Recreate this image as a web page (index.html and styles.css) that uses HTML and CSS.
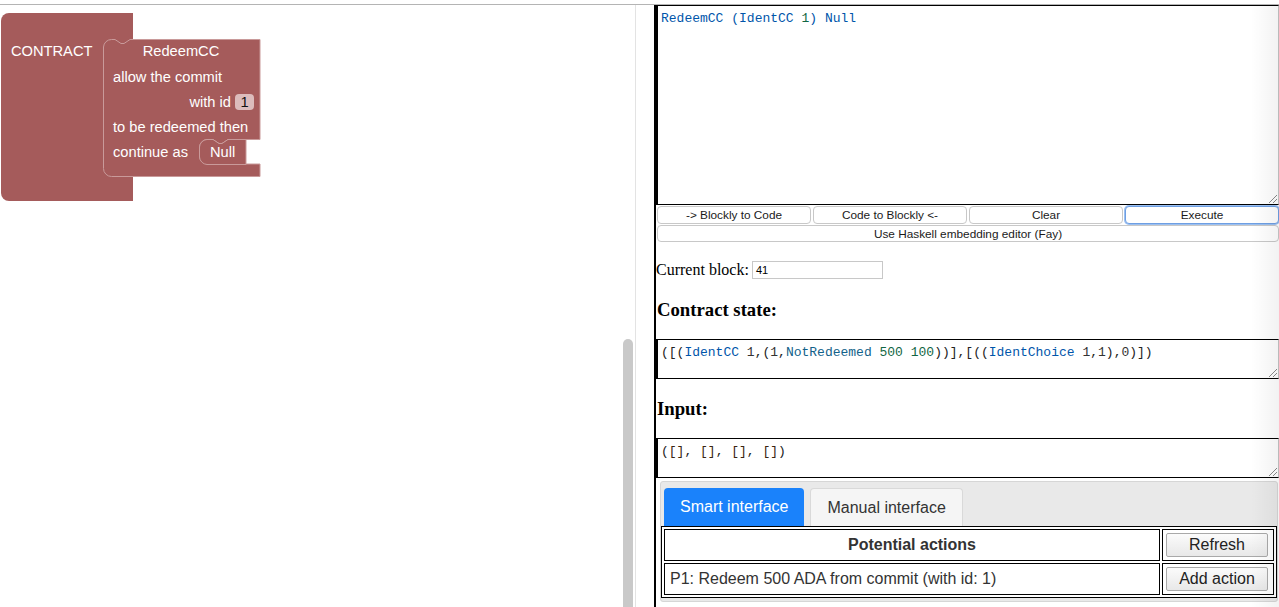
FILE: index.html
```html
<!DOCTYPE html>
<html>
<head>
<meta charset="utf-8">
<title>Marlowe</title>
<link rel="stylesheet" href="styles.css">
</head>
<body>
<div class="topbar"></div>
<div class="main">
  <div class="workspace">
    <svg class="blocks" width="300" height="210" viewBox="0 5 300 210" xmlns="http://www.w3.org/2000/svg">
      <path class="blk" d="M1,21 A8,8 0 0 1 9,13 L133,13 L133,201 L9,201 A8,8 0 0 1 1,193 Z"/>
      <path class="blk hl" d="M103.5,47 A8,8 0 0 1 111.5,39.5 L115,39.5 l6,4 l3,0 l6,-4 L260,39.5 L260,139.5 L228,139.5 l-6,4 l-3,0 l-6,-4 L207,139.5 A8,8 0 0 0 199.5,147 L199.5,156 A8,8 0 0 0 207,164 L260,164 L260,176.5 L111.5,176.5 A8,8 0 0 1 103.5,168.5 Z"/>
      <path class="blk hl" d="M199.5,147 A8,8 0 0 1 207,139.5 L213,139.5 l6,4 l3,0 l6,-4 L246,139.5 L246,164.5 L207,164.5 A8,8 0 0 1 199.5,157 Z"/>
      <rect class="numfield" x="235" y="94" width="19" height="16" rx="4" ry="4"/>
      <text class="lbl" x="11" y="56">CONTRACT</text>
      <text class="lbl" x="181" y="56" text-anchor="middle">RedeemCC</text>
      <text class="lbl" x="113" y="82">allow the commit</text>
      <text class="lbl" x="231" y="107" text-anchor="end">with id</text>
      <text class="num" x="244.5" y="107" text-anchor="middle">1</text>
      <text class="lbl" x="113" y="132">to be redeemed then</text>
      <text class="lbl" x="113" y="157">continue as</text>
      <text class="lbl" x="210" y="157">Null</text>
    </svg>
    <div class="scrollbar"></div>
  </div>
  <div class="spacer"></div>
  <div class="panel">
    <div class="code code-main"><span class="v">RedeemCC</span> <span class="v">(IdentCC</span> <span class="n">1</span><span class="v">)</span> <span class="v">Null</span></div>
    <div class="btn-row">
      <button class="btn">-&gt; Blockly to Code</button>
      <button class="btn">Code to Blockly &lt;-</button>
      <button class="btn">Clear</button>
      <button class="btn focus">Execute</button>
    </div>
    <button class="btn wide">Use Haskell embedding editor (Fay)</button>
    <div class="current">Current block:<span class="field">41</span></div>
    <h3 class="heading">Contract state:</h3>
    <div class="code code-small"><span class="b">([(</span><span class="v">IdentCC</span> <span class="d">1</span><span class="b">,(</span><span class="d">1</span><span class="b">,</span><span class="t">NotRedeemed</span> <span class="n">500</span> <span class="n">100</span><span class="b">))],[((</span><span class="v">IdentChoice</span> <span class="d">1</span><span class="b">,</span><span class="d">1</span><span class="b">),</span><span class="d">0</span><span class="b">)])</span></div>
    <h3 class="heading heading-input">Input:</h3>
    <div class="code code-small"><span class="b">(</span><span class="br">[]</span><span class="b">, </span><span class="br">[]</span><span class="b">, </span><span class="br">[]</span><span class="b">, </span><span class="br">[]</span><span class="b">)</span></div>
    <div class="tabs-box">
      <div class="tabs">
        <div class="tab active">Smart interface</div>
        <div class="tab inactive">Manual interface</div>
      </div>
      <table class="actions">
        <tr>
          <td class="head">Potential actions</td>
          <td class="btn-cell"><button class="act">Refresh</button></td>
        </tr>
        <tr>
          <td class="desc">P1: Redeem 500 ADA from commit (with id: 1)</td>
          <td class="btn-cell"><button class="act">Add action</button></td>
        </tr>
      </table>
    </div>
    <div class="edge-shade"></div>
  </div>
</div>
</body>
</html>
```

FILE: styles.css
```css
html, body {
  margin: 0;
  padding: 0;
  background: #fff;
}
body {
  font-family: "Liberation Serif", "Times New Roman", serif;
  overflow: hidden;
  width: 1279px;
  height: 607px;
}
.topbar {
  height: 4px;
  border-bottom: 1px solid #b4b4b4;
}
.main {
  display: flex;
  height: 602px;
}
.workspace {
  position: relative;
  width: 635px;
  flex: none;
  border-right: 1px solid #e3e3e3;
}
.blocks {
  display: block;
}
.blk {
  fill: #a55b5b;
}
.hl {
  stroke: #c99a9a;
  stroke-width: 1;
}
.numfield {
  fill: #dcbcbc;
}
.lbl {
  fill: #fff;
  font-family: "Liberation Sans", Arial, sans-serif;
  font-size: 14.67px;
}
.num {
  fill: #111;
  font-family: "Liberation Sans", Arial, sans-serif;
  font-size: 14.67px;
}
.scrollbar {
  position: absolute;
  left: 623px;
  top: 334px;
  bottom: 0;
  width: 10px;
  border-radius: 5px 5px 0 0;
  background: #c9c9c9;
}
.spacer {
  width: 18px;
  flex: none;
}
.panel {
  position: relative;
  flex: 1;
  min-width: 0;
  border-left: 2px solid #000;
  display: flex;
  flex-direction: column;
}
.code {
  position: relative;
  border: 1px solid #000;
  border-left-width: 2px;
  border-right-color: #c4c4c4;
  font-family: "Liberation Mono", "Courier New", monospace;
  font-size: 13px;
  line-height: 15px;
  padding: 5px 3px;
  white-space: pre;
  color: #05a;
  flex: none;
}
.code::after {
  content: "";
  position: absolute;
  right: 1px;
  bottom: 1px;
  width: 8px;
  height: 8px;
  background: linear-gradient(135deg, transparent 0 48%, #8a8a8a 48% 56%, transparent 56% 72%, #8a8a8a 72% 80%, transparent 80%);
}
.code-main {
  height: 188px;
}
.code-small {
  height: 28px;
}
.v { color: #05a; }
.n { color: #164; }
.d { color: #333; }
.b { color: #222; }
.t { color: #12628a; }
.br { color: #3a2410; }
.btn-row {
  display: grid;
  grid-template-columns: repeat(4, 1fr);
  gap: 2px;
  margin: 1px 0 0 1px;
  flex: none;
}
.btn {
  height: 18px;
  padding: 0;
  border: 1px solid #c8c8c8;
  border-radius: 4px;
  background: #fff;
  font-family: "Liberation Sans", Arial, sans-serif;
  font-size: 11.8px;
  color: #1a1a1a;
  line-height: 16px;
}
.btn.focus {
  border: 1px solid #6e9fe3;
  box-shadow: 0 0 0 1px #9cc0f0;
}
.btn.wide {
  height: 17px;
  margin: 1px 0 0 1px;
  flex: none;
}
.current {
  margin-top: 19px;
  height: 18px;
  display: flex;
  align-items: center;
  font-size: 16px;
  color: #000;
  flex: none;
}
.field {
  margin-left: 3px;
  width: 131px;
  height: 18px;
  box-sizing: border-box;
  border: 1px solid #c8c8c8;
  font-family: "Liberation Sans", Arial, sans-serif;
  font-size: 11px;
  line-height: 16px;
  padding-left: 3px;
}
.heading {
  font-size: 18.72px;
  line-height: 22px;
  font-weight: bold;
  margin: 20px 0 18px 1px;
  flex: none;
}
.heading-input {
  margin-top: 19px;
  margin-bottom: 18px;
}
.tabs-box {
  margin: 3px 1px 0 4px;
  background: #e9e9e9;
  border: 1px solid #d6d6d6;
  border-radius: 3px;
  padding: 6px 0 3px 0;
  flex: none;
}
.tabs {
  display: flex;
  gap: 6px;
  padding-left: 3px;
}
.tab {
  height: 38px;
  box-sizing: border-box;
  padding: 0 16px;
  display: flex;
  align-items: center;
  font-family: "Liberation Sans", Arial, sans-serif;
  font-size: 16px;
  color: #333;
  border-radius: 4px 4px 0 0;
}
.tab.active {
  background: #1a82fb;
  color: #fff;
}
.tab.inactive {
  background: #f5f5f5;
  border: 1px solid #d9d9d9;
  border-bottom: none;
}
.actions {
  width: 100%;
  background: #fff;
  border: 1px solid #000;
  border-spacing: 2px;
  font-family: "Liberation Sans", Arial, sans-serif;
  font-size: 16px;
  color: #333;
}
.actions td {
  border: 1px solid #000;
  padding: 3px 5px;
}
.actions .head {
  text-align: center;
  font-weight: bold;
  height: 24px;
}
.actions .desc {
  height: 23px;
}
.actions .btn-cell {
  width: 102px;
  padding: 3px 5px 3px 3px;
}
.act {
  display: block;
  width: 102px;
  height: 24px;
  padding: 0;
  border: 1px solid #a9a9a9;
  border-radius: 2px;
  background: linear-gradient(#fbfbfb, #e8e8e8);
  font-family: "Liberation Sans", Arial, sans-serif;
  font-size: 16px;
  color: #222;
}
.edge-shade {
  position: absolute;
  top: 0;
  right: 0;
  bottom: 0;
  width: 28px;
  background: linear-gradient(to right, rgba(0, 0, 0, 0), rgba(0, 0, 0, 0.05));
  pointer-events: none;
}
```
